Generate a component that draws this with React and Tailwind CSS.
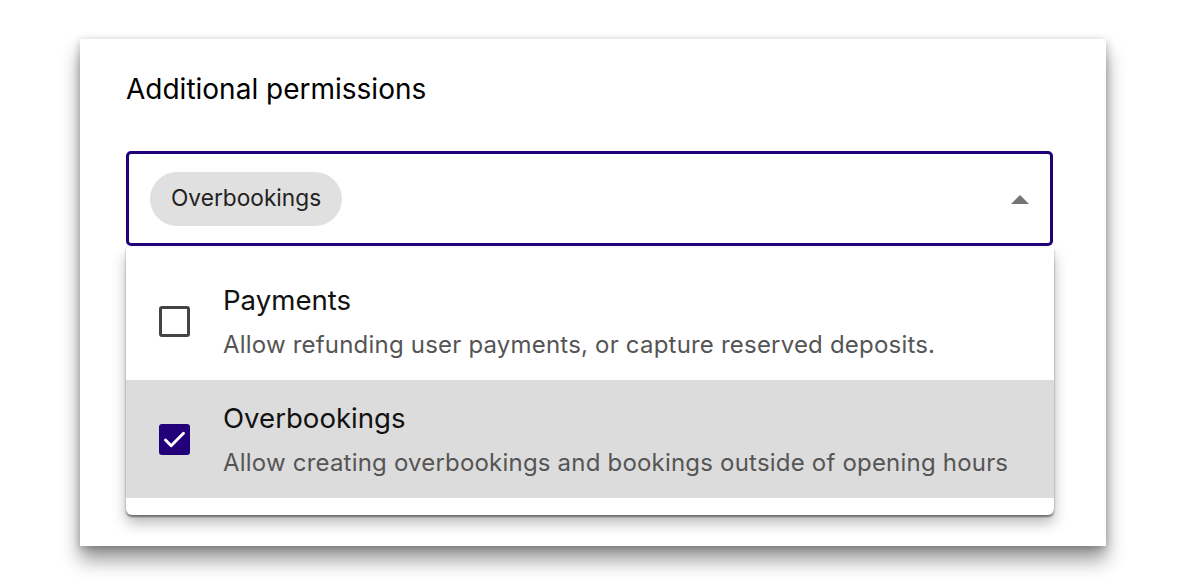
import React from "react";

const options = [
  {
    id: "payments",
    label: "Payments",
    description: "Allow refunding user payments, or capture reserved deposits.",
    checked: false,
  },
  {
    id: "overbookings",
    label: "Overbookings",
    description: "Allow creating overbookings and bookings outside of opening hours",
    checked: true,
  },
];

function Checkbox({ checked }) {
  if (checked) {
    return (
      <span className="w-[31px] h-[31px] rounded-[3px] bg-[#22007a] flex items-center justify-center shrink-0">
        <svg width="27" height="27" viewBox="0 0 24 24" fill="none">
          <path d="M4 12.5l5 5L20 6.5" stroke="#fff" strokeWidth="2.6" strokeLinecap="round" strokeLinejoin="round" />
        </svg>
      </span>
    );
  }
  return <span className="w-[31px] h-[31px] rounded-[3px] border-[3.5px] border-[#444] shrink-0" />;
}

export default function App() {
  return (
    <div className="w-[1186px] h-[585px] bg-white pt-[39px] pl-[80px] font-['Inter',sans-serif]">
      <div className="w-[1026px] h-[507px] bg-white shadow-[0_14px_18px_rgba(0,0,0,0.4),0_2px_8px_rgba(0,0,0,0.25)] pt-[32px] pl-[46px] pr-[53px]">
        <h2 className="text-[28px] leading-[36px] text-black">Additional permissions</h2>

        <div className="mt-[44px] relative">
          {/* Select box */}
          <div className="h-[95px] border-[3px] border-[#22007a] rounded-[5px] flex items-center justify-between pl-[21px] pr-[20px]">
            <span className="h-[54px] px-[21px] rounded-full bg-[#e0e0e0] flex items-center text-[22.7px] text-[#222]">
              Overbookings
            </span>
            <svg width="20" height="10" viewBox="0 0 20 10">
              <path d="M1 10L10 1l9 9z" fill="#757575" />
            </svg>
          </div>

          {/* Dropdown menu */}
          <div className="absolute left-0 top-[97px] w-[928px] bg-white rounded-b-[6px] shadow-[0_8px_14px_rgba(0,0,0,0.28),0_2px_2px_rgba(0,0,0,0.45)] pt-[14px] pb-[17px]">
            {options.map((o) => (
              <div
                key={o.id}
                className={`h-[118px] flex items-center pl-[33px] ${o.checked ? "bg-[#dcdcdc]" : ""}`}
              >
                <Checkbox checked={o.checked} />
                <div className="ml-[33px]">
                  <div className="text-[27.6px] leading-[34px] text-[#111]">{o.label}</div>
                  <div className="text-[24px] leading-[30px] mt-[13px] text-[#555] tracking-[0.2px]">{o.description}</div>
                </div>
              </div>
            ))}
          </div>
        </div>
      </div>
    </div>
  );
}
